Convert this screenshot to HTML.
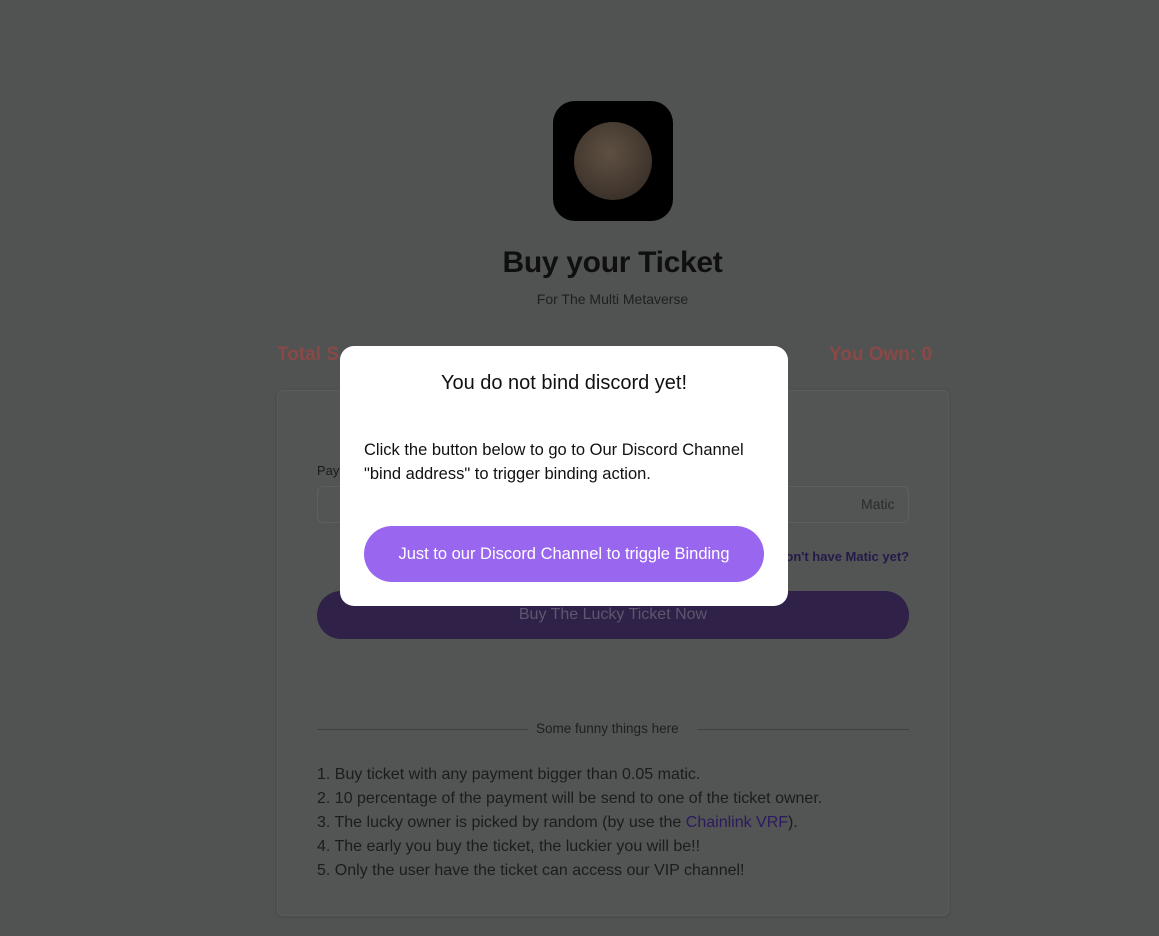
<!DOCTYPE html>
<html><head><meta charset="utf-8"><style>
*{box-sizing:border-box;margin:0;padding:0}
body{width:1159px;height:936px;background:#515352;font-family:"Liberation Sans",Arial,sans-serif;position:relative;overflow:hidden}
.abs{position:absolute}
</style></head><body>
<div class="abs" style="left:553px;top:101px;width:120px;height:120px;background:#000;border-radius:22px"></div>
<div class="abs" style="left:574px;top:122px;width:78px;height:78px;border-radius:50%;background:radial-gradient(circle at 45% 40%,#5e5042,#43382f 60%,#2a241f)"></div>
<div class="abs" style="left:33px;width:1159px;top:246px;text-align:center;font-size:30px;font-weight:bold;color:#0f0f10;letter-spacing:-0.3px">Buy your Ticket</div>
<div class="abs" style="left:33px;width:1159px;top:291px;text-align:center;font-size:14px;color:#1e1f1f">For The Multi Metaverse</div>
<div class="abs" style="left:277px;top:344px;font-size:19px;font-weight:bold;color:#8a4846">Total S</div>
<div class="abs" style="left:829px;top:344px;font-size:19px;font-weight:bold;color:#8a4846">You Own: 0</div>
<div class="abs" style="left:277px;top:390px;width:672px;height:526px;background:#535554;border:1px solid #5a5c5b;border-radius:6px;box-shadow:0 1px 4px rgba(0,0,0,.15)"></div>
<div class="abs" style="left:317px;top:463px;font-size:13px;color:#1a1a1a">Pay</div>
<div class="abs" style="left:317px;top:486px;width:592px;height:37px;border:1px solid #5e605f;border-radius:6px"></div>
<div class="abs" style="left:861px;top:496px;font-size:14px;color:#2a2b2b">Matic</div>
<div class="abs" style="left:776px;top:549px;font-size:13px;font-weight:bold;color:#25194a">Don't have Matic yet?</div>
<div class="abs" style="left:317px;top:591px;width:592px;height:48px;border-radius:24px;background:#2f2147;text-align:center;line-height:48px;font-size:16px;color:#5f566f">Buy The Lucky Ticket Now</div>
<div class="abs" style="left:317px;top:729px;width:211px;height:1px;background:#3f4140"></div>
<div class="abs" style="left:697px;top:729px;width:212px;height:1px;background:#3f4140"></div>
<div class="abs" style="left:536px;top:721px;font-size:13.5px;color:#1e1f1f">Some funny things here</div>
<div class="abs" style="left:317px;top:763px;font-size:16px;line-height:24px;color:#1b1c1c">1. Buy ticket with any payment bigger than 0.05 matic.<br>2. 10 percentage of the payment will be send to one of the ticket owner.<br>3. The lucky owner is picked by random (by use the <span style="color:#2b1a5e">Chainlink VRF</span>).<br>4. The early you buy the ticket, the luckier you will be!!<br>5. Only the user have the ticket can access our VIP channel!</div>
<div class="abs" style="left:340px;top:346px;width:448px;height:260px;background:#fff;border-radius:14px">
<div style="position:absolute;left:0;width:100%;top:26px;text-align:center;font-size:20px;color:#111">You do not bind discord yet!</div>
<div style="position:absolute;left:24px;top:92px;font-size:16.5px;line-height:24px;color:#111;white-space:nowrap">Click the button below to go to Our Discord Channel<br>"bind address" to trigger binding action.</div>
<div style="position:absolute;left:24px;top:180px;width:400px;height:56px;border-radius:28px;background:#9966f0;color:#fff;text-align:center;line-height:56px;font-size:16.5px;white-space:nowrap">Just to our Discord Channel to triggle Binding</div>
</div>
</body></html>
